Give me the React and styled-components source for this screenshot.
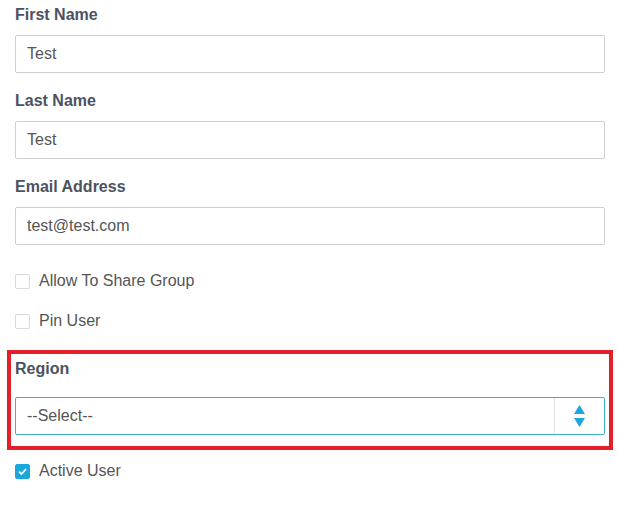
import React from "react";
import styled, { createGlobalStyle } from "styled-components";

const GlobalStyle = createGlobalStyle`
    body {
        margin: 0;
        background: #ffffff;
        font-family: "Liberation Sans", Arial, sans-serif;
    }
`;

const Form = styled.form`
    width: 590px;
    padding: 5px 12px 0 15px;
`;

const Field = styled.div`
    margin-bottom: 18px;
`;

const Label = styled.label`
    display: block;
    font-size: 16px;
    font-weight: 700;
    line-height: 20px;
    color: #4b5262;
    margin-bottom: ${(props) => props.gap || 10}px;
`;

const Input = styled.input`
    display: block;
    box-sizing: border-box;
    width: 100%;
    height: 38px;
    padding: 0 11px;
    border: 1px solid #cfcfcf;
    border-radius: 2px;
    font-family: inherit;
    font-size: 16px;
    color: #555555;
    outline: none;
`;

const CheckList = styled.div`
    padding-top: 8px;
`;

const CheckRow = styled.label`
    display: flex;
    align-items: center;
    height: 20px;
    margin-bottom: 20px;
    font-size: 16px;
    color: #555555;
`;

const Box = styled.span`
    box-sizing: border-box;
    display: flex;
    align-items: center;
    justify-content: center;
    width: 15px;
    height: 15px;
    margin-right: 9px;
    border-radius: 2px;
    border: 1px solid ${(props) => (props.checked ? "#1ba6dd" : "#d9d9d9")};
    background: ${(props) => (props.checked ? "#1ba6dd" : "#ffffff")};
`;

/* red outline drawn round the region picker */
const Highlight = styled.div`
    margin: -1px -8px 0 -8px;
    padding: 5px 4px 11px 4px;
    border: 4px solid #e3202a;
`;

const SelectBox = styled.div`
    box-sizing: border-box;
    display: flex;
    height: 38px;
    border: 1px solid #3eaec8;
    border-radius: 2px;
`;

const SelectValue = styled.div`
    flex: 1;
    display: flex;
    align-items: center;
    padding-left: 11px;
    font-size: 16px;
    color: #555555;
`;

const SelectArrows = styled.div`
    width: 49px;
    display: flex;
    align-items: center;
    justify-content: center;
    border-left: 1px solid #e2e2e2;
`;

const ActiveRow = styled(CheckRow)`
    margin-top: 11px;
`;

function Check({ checked }) {
    return (
        <Box checked={checked}>
            {checked && (
                <svg width="9" height="7" viewBox="0 0 9 7">
                    <path d="M1 3.6 L3.4 6 L8 1.2" fill="none" stroke="#fff" strokeWidth="1.8" />
                </svg>
            )}
        </Box>
    );
}

export default function App() {
    return (
        <>
            <GlobalStyle />
            <Form>
                <Field>
                    <Label>First Name</Label>
                    <Input defaultValue="Test" />
                </Field>
                <Field>
                    <Label>Last Name</Label>
                    <Input defaultValue="Test" />
                </Field>
                <Field>
                    <Label>Email Address</Label>
                    <Input defaultValue="test@test.com" />
                </Field>
                <CheckList>
                    <CheckRow>
                        <Check />
                        Allow To Share Group
                    </CheckRow>
                    <CheckRow>
                        <Check />
                        Pin User
                    </CheckRow>
                </CheckList>
                <Highlight>
                    <Label gap={18}>Region</Label>
                    <SelectBox>
                        <SelectValue>--Select--</SelectValue>
                        <SelectArrows>
                            <svg width="11" height="23" viewBox="0 0 11 23">
                                <path d="M5.5 0 L11 9 L0 9 Z" fill="#1fa5de" />
                                <path d="M0 13 L11 13 L5.5 22 Z" fill="#1fa5de" />
                            </svg>
                        </SelectArrows>
                    </SelectBox>
                </Highlight>
                <ActiveRow>
                    <Check checked />
                    Active User
                </ActiveRow>
            </Form>
        </>
    );
}
